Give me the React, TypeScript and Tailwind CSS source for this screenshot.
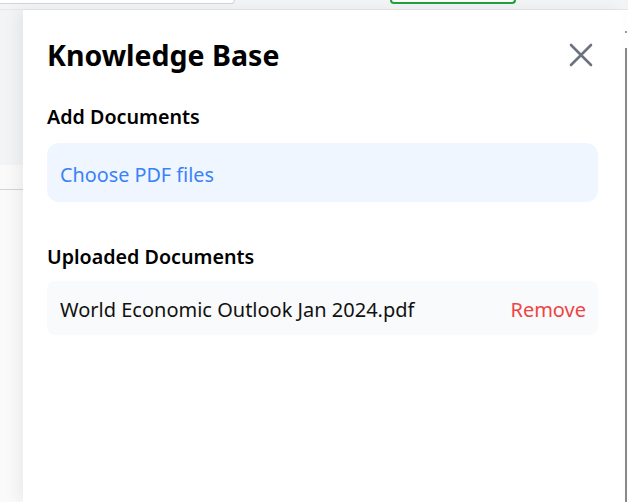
import React from 'react';

const docs = ['World Economic Outlook Jan 2024.pdf'];

const CloseIcon = () => (
  <svg width="24" height="24" viewBox="0 0 24 24" fill="none" stroke="#6b7280" strokeWidth="2.6" strokeLinecap="round">
    <path d="M2 2L22 22M22 2L2 22" />
  </svg>
);

export default function App() {
  return (
    <div className="relative h-[502px] w-[628px] overflow-hidden bg-white font-['Noto_Sans',sans-serif]">
      {/* page behind the drawer */}
      <div className="flex h-[10px] items-start border-b border-[#e5e7eb] bg-[#f3f4f6]">
        <div className="ml-[-10px] h-[4px] w-[245px] rounded-br-[14px] border-b border-r border-[#d1d5db] bg-white"></div>
        <div className="ml-[155px] h-[4px] w-[126px] rounded-b-[14px] border-x-2 border-b-2 border-[#22a33a] bg-white"></div>
      </div>
      <div className="flex h-[492px] w-[23px] flex-col">
        <div className="h-[155px] bg-[#f3f4f6]"></div>
        <div className="h-[25px] border-b border-[#d1d5db] bg-[#fafafa]"></div>
        <div className="flex-1 bg-[#fafafa]"></div>
      </div>
      <div className="absolute right-[1px] top-[31px] h-[2px] w-[2px] bg-[#9a9a9a]"></div>
      <div className="absolute right-[1px] top-[48px] bottom-0 w-[2px] bg-[#8a8a8a]"></div>

      {/* drawer */}
      <div className="absolute left-[23px] top-[10px] bottom-0 w-[600px] bg-white px-[24px] pt-[25px] shadow-[-6px_0_14px_rgba(0,0,0,0.06)]">
        <div className="flex h-[40px] items-center justify-between">
          <h2 className="text-[28.5px] font-bold text-black">Knowledge Base</h2>
          <button className="mr-[6px] flex h-[24px] w-[24px] items-center justify-center">
            <CloseIcon />
          </button>
        </div>

        <h3 className="mt-[27px] text-[19.7px] leading-[30px] font-semibold text-black">Add Documents</h3>
        <label className="mt-[11px] flex h-[59px] w-[551px] cursor-pointer items-center rounded-[12px] bg-[#eff6ff] px-[13px] pt-[4px] text-[19.8px] text-[#3b82f6]">
          Choose PDF files
          <input type="file" accept="application/pdf" multiple className="hidden" />
        </label>

        <h3 className="mt-[40px] text-[19.7px] leading-[30px] font-semibold text-black">Uploaded Documents</h3>
        <div className="mt-[9px] flex flex-col gap-2">
          {docs.map((d) => (
            <div key={d} className="flex h-[54px] w-[551px] items-center justify-between rounded-[8px] bg-[#f9fafb] pl-[13px] pr-[12px] pt-[4px]">
              <span className="text-[20px] text-[#111]">{d}</span>
              <button className="text-[20px] text-[#ef4444]">Remove</button>
            </div>
          ))}
        </div>
      </div>
    </div>
  );
}
